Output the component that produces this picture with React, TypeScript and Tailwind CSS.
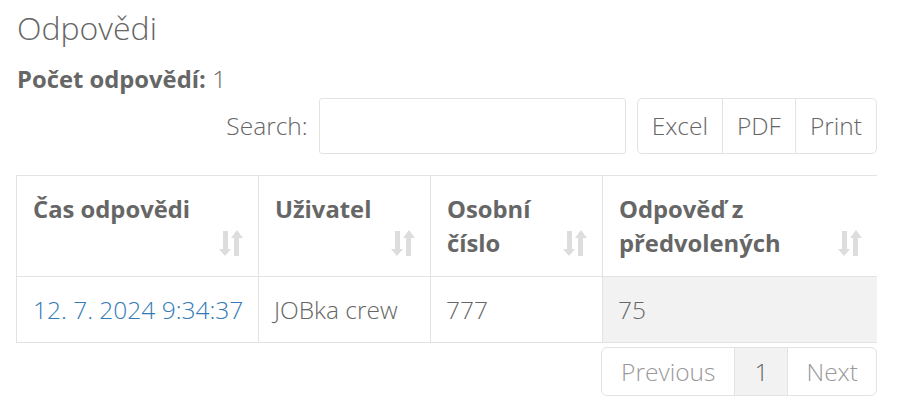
import React from "react";

function SortIcon() {
  return (
    <svg width="24" height="26" viewBox="0 0 24 26" className="shrink-0" fill="#dddddd">
      <rect x="4" y="1" width="5" height="19" />
      <polygon points="0,19 12,19 6,26" />
      <polygon points="12,8 24,8 18,0" />
      <rect x="15" y="7" width="5" height="19" />
    </svg>
  );
}

const headers = [
  { label: "Čas odpovědi", w: "w-[242px]" },
  { label: "Uživatel", w: "w-[172px]" },
  { label: "Osobní číslo", w: "w-[172px]" },
  { label: "Odpověď z předvolených", w: "w-[274px]" },
];

export default function App() {
  return (
    <div className="w-[898px] h-[412px] bg-white pl-[16px] font-['Open_Sans',sans-serif] font-light text-[#666] text-[24.5px] leading-[34px]">
      <div className="w-[861px]">
        <h3 className="pt-[10px] pl-[1px] text-[32px] leading-[1.1] font-light text-[#666]">Odpovědi</h3>
        <p className="mt-[17px] pl-[1px]">
          <span className="font-bold text-[23.8px]">Počet odpovědí:</span> 1
        </p>
        <div className="mt-[2px] flex items-center justify-end">
          <label className="mr-[11px]">Search:</label>
          <input className="h-[56px] w-[307px] rounded-[3px] border border-[#e3e3e3] outline-none" />
          <div className="ml-[11px] flex h-[56px] rounded-[5px] border border-[#e3e3e3]">
            <span className="flex items-center px-[14px]">Excel</span>
            <span className="flex items-center border-l border-[#e3e3e3] px-[14px]">PDF</span>
            <span className="flex items-center border-l border-[#e3e3e3] px-[14px]">Print</span>
          </div>
        </div>
        <table className="mt-[21px] w-[860px] table-fixed border-collapse">
          <thead>
            <tr className="border-t border-[#e3e3e3]">
              {headers.map((h, i) => (
                <th
                  key={h.label}
                  className={`${h.w} border-l border-b border-[#e3e3e3] py-[16px] pl-[16px] pr-[15px] text-left align-top text-[23.8px] font-bold`}
                >
                  <div className="flex h-[68px] items-end justify-between">
                    <span className={`self-start ${i >= 2 ? "w-[140px]" : ""}`}>{h.label}</span>
                    <span className="mb-[4px]">
                      <SortIcon />
                    </span>
                  </div>
                </th>
              ))}
            </tr>
          </thead>
          <tbody>
            <tr className="border-b border-[#e3e3e3]">
              <td className="border-l border-[#e3e3e3] pt-[16px] pb-[15px] pl-[16px] text-[#337ab7]">12. 7. 2024 9:34:37</td>
              <td className="border-l border-[#e3e3e3] pt-[16px] pb-[15px] pl-[15px]">JOBka crew</td>
              <td className="border-l border-[#e3e3e3] pt-[16px] pb-[15px] pl-[15px]">777</td>
              <td className="border-l border-[#e3e3e3] bg-[#f2f2f2] pt-[16px] pb-[15px] pl-[15px]">75</td>
            </tr>
          </tbody>
        </table>
        <div className="mt-[4px] flex justify-end">
          <div className="flex h-[49px] overflow-hidden rounded-[6px] border border-[#e3e3e3]">
            <span className="flex items-center px-[19px] text-[#999]">Previous</span>
            <span className="flex items-center border-l border-[#e3e3e3] bg-[#f2f2f2] px-[19px]">1</span>
            <span className="flex items-center border-l border-[#e3e3e3] px-[18px] text-[#999]">Next</span>
          </div>
        </div>
      </div>
    </div>
  );
}
